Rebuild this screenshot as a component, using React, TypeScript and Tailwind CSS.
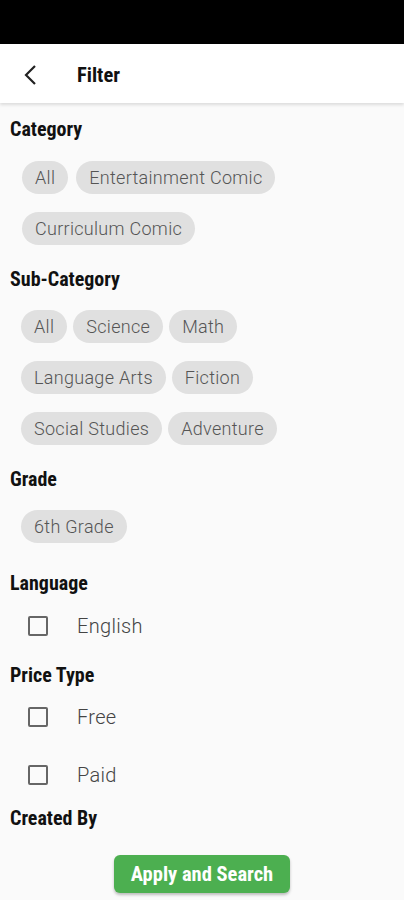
import React from 'react'

const cond = { fontFamily: '"Roboto Condensed", "Liberation Sans Narrow", Roboto, sans-serif' }

function Chip({ label }: { label: string }) {
  return (
    <span className="h-[33px] px-[13px] rounded-full bg-[#e0e0e0] text-[#555] text-[18px] tracking-[0.3px] font-light flex items-center leading-none">
      {label}
    </span>
  )
}

function Heading({ children }: { children: React.ReactNode }) {
  return (
    <div className="text-[20px] leading-[24px] font-bold text-[#111] pl-[10px]" style={cond}>
      {children}
    </div>
  )
}

function Check({ label }: { label: string }) {
  return (
    <div className="flex items-center h-[40px] pl-[28px]">
      <span className="w-[20px] h-[20px] border-2 border-[#666] rounded-[2px]" />
      <span className="ml-[29px] text-[20px] tracking-[0.3px] font-light text-[#444]">{label}</span>
    </div>
  )
}

export default function App() {
  return (
    <div className="w-[404px] h-[900px] bg-[#fafafa] overflow-hidden" style={{ fontFamily: 'Roboto, sans-serif' }}>
      <div className="h-[44px] bg-black" />
      <div className="h-[59px] pt-[3px] bg-white flex items-center shadow-[0_2px_3px_rgba(0,0,0,0.12)] relative">
        <svg width="14" height="20" viewBox="0 0 14 20" className="ml-[23px]">
          <path d="M12 1 L3 10 L12 19" fill="none" stroke="#222" strokeWidth="2.2" />
        </svg>
        <span className="ml-[40px] text-[20.5px] font-bold text-[#111]" style={cond}>Filter</span>
      </div>

      <div className="pt-[14px]">
        <Heading>Category</Heading>
        <div className="flex flex-wrap gap-x-2 gap-y-[18px] pl-[22px] pr-[30px] mt-[20px]">
          <Chip label="All" />
          <Chip label="Entertainment Comic" />
          <Chip label="Curriculum Comic" />
        </div>

        <div className="mt-[22px]"><Heading>Sub-Category</Heading></div>
        <div className="flex flex-wrap gap-x-[6px] gap-y-[18px] pl-[21px] pr-[30px] mt-[19px]">
          <Chip label="All" />
          <Chip label="Science" />
          <Chip label="Math" />
          <Chip label="Language Arts" />
          <Chip label="Fiction" />
          <Chip label="Social Studies" />
          <Chip label="Adventure" />
        </div>

        <div className="mt-[22px]"><Heading>Grade</Heading></div>
        <div className="flex flex-wrap gap-2 pl-[21px] mt-[19px]">
          <Chip label="6th Grade" />
        </div>

        <div className="mt-[28px]"><Heading>Language</Heading></div>
        <div className="mt-[11px]"><Check label="English" /></div>

        <div className="mt-[17px]"><Heading>Price Type</Heading></div>
        <div className="mt-[10px]"><Check label="Free" /></div>
        <div className="mt-[18px]"><Check label="Paid" /></div>

        <div className="mt-[11px]"><Heading>Created By</Heading></div>
        <div className="flex justify-center mt-[25px]">
          <button className="w-[176px] h-[38px] rounded-[6px] bg-[#4caf50] text-white text-[20.5px] font-bold shadow-[0_2px_3px_rgba(0,0,0,0.25)]" style={cond}>
            Apply and Search
          </button>
        </div>
      </div>
    </div>
  )
}
